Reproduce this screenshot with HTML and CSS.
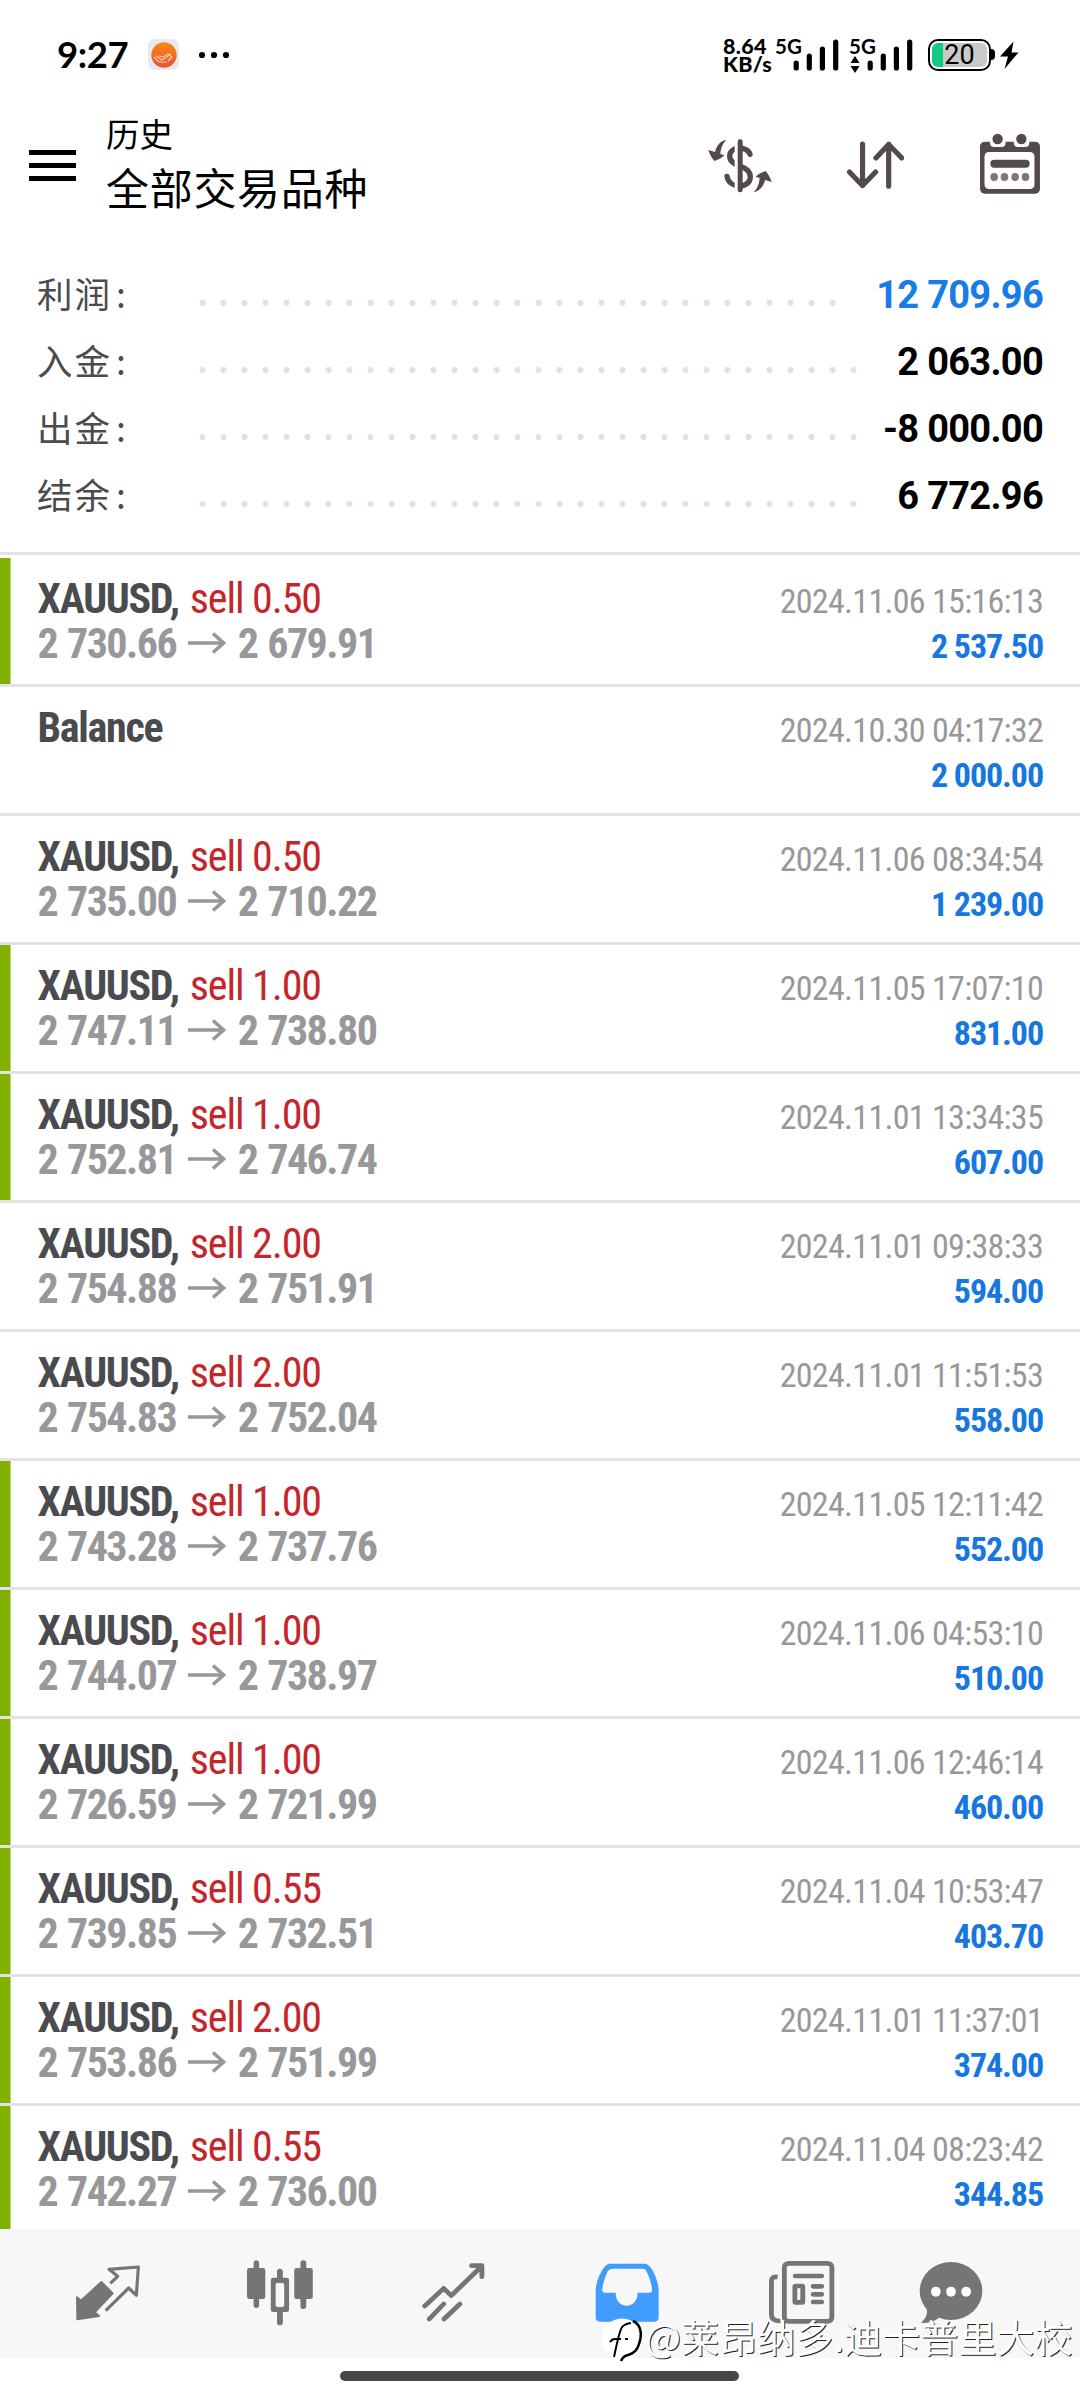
FILE: index.html
```
<!DOCTYPE html>
<html lang="zh-CN">
<head>
<meta charset="utf-8">
<title>历史</title>
<link rel="stylesheet" href="styles.css">
</head>
<body>
<div class="screen">
  <div class="status">
    <span class="time">9:27</span>
    <svg class="app-badge" width="31" height="31" viewBox="0 0 31 31"><defs><linearGradient id="sun" x1="0" y1="0" x2="0" y2="1"><stop offset="0" stop-color="#f78b10"/><stop offset="1" stop-color="#e9503c"/></linearGradient></defs><rect width="31" height="31" rx="7" fill="#e6e9f1"/><circle cx="16" cy="16" r="12.700" fill="url(#sun)"/><path d="M6 18l5 5h8M8 17l6 4 9-6M11 17l4 1 5-3 4 3-4 4" fill="none" stroke="#fbd3a0" stroke-width="1.100"/></svg>
    <svg class="more" width="32" height="8" viewBox="0 0 32 8"><circle cx="4" cy="4" r="3.100"/><circle cx="16" cy="4" r="3.100"/><circle cx="28" cy="4" r="3.100"/></svg>
    <span class="speed">8.64<br>KB/s</span>
    <span class="net">5G</span>
    <svg class="bars" width="46" height="32" viewBox="0 0 46 32"><path d="M3.200 24v5M16.300 17v12M29.400 10v19M42.700 3v26"/></svg>
    <span class="net second">5G<svg class="updown" width="10" height="17" viewBox="0 0 10 17"><path d="M5 0l4.500 7h-9zM5 17L.5 10h9z"/></svg></span>
    <svg class="bars second" width="46" height="32" viewBox="0 0 46 32"><path d="M3.200 24v5M16.300 17v12M29.400 10v19M42.700 3v26"/></svg>
    <div class="battery"><span>20</span></div>
    <svg class="bolt" width="28" height="30" viewBox="0 0 28 30"><path d="M0 9q4 0 4 4v3q0 4-4 4z"/><path d="M22.500 1.500L9 16.500h8L13.500 29 27.500 12.500h-7z"/></svg>
  </div>

  <header class="header">
    <div class="burger"><i></i><i></i><i></i></div>
    <div class="titles"><span class="title">历史</span><span class="subtitle">全部交易品种</span></div>
    <svg class="act dollar" width="66.700" height="56.700" viewBox="50 50 200 170"><path d="M179 102C176 90 160 83 147 83C128 84 118 95 118 107C118 124 132 131 150 138C168 144 180 152 180 170C180 186 166 196 150 197C128 197 113 186 110 168" fill="none" stroke="#544a49" stroke-width="16" stroke-linecap="round"/><path d="M133 50h12v170h-12z" fill="#fff"/><rect x="142" y="57" width="15" height="159" rx="7"/><path id="swap" d="M108 58C90 62 78 76 74 95L54 89C58 103 65 113 72 122C82 118 92 116 102 105L90 101C91 86 96 70 108 58Z"/><use href="#swap" transform="rotate(180 149 137)"/></svg>
    <svg class="act sort" width="58.500" height="48.300" viewBox="888 424 170 145" preserveAspectRatio="none"><path d="M936 433V558M898 517L936 558L974 517M1012 560V434M975 475L1012 434L1050 475" fill="none" stroke="#544a49" stroke-width="15" stroke-linecap="round" stroke-linejoin="round"/></svg>
    <svg class="act cal" width="62" height="62" viewBox="1276 400 180 186" preserveAspectRatio="none"><rect x="1279" y="426" width="174" height="156" rx="14"/><rect x="1292" y="457" width="145" height="111" rx="13" fill="#fff"/><path d="M1308 424h45v5q0 13-12 13h-21q-12 0-12-13zM1377 424h45v5q0 13-12 13h-21q-12 0-12-13z" fill="#fff"/><ellipse cx="1330" cy="418" rx="15" ry="16"/><ellipse cx="1399" cy="418" rx="15" ry="16"/><rect x="1309" y="480" width="114" height="24" rx="11"/><g fill="#7f7674"><ellipse cx="1320" cy="532" rx="11" ry="12"/><ellipse cx="1350" cy="532" rx="11" ry="12"/><ellipse cx="1381" cy="532" rx="11" ry="12"/><ellipse cx="1411" cy="532" rx="11" ry="12"/></g></svg>
  </header>

  <section class="summary">
    <div class="sum"><span class="label">利润<i>:</i></span><i class="dots short"></i><b class="blue">12 709.96</b></div>
    <div class="sum"><span class="label">入金<i>:</i></span><i class="dots"></i><b>2 063.00</b></div>
    <div class="sum"><span class="label">出金<i>:</i></span><i class="dots"></i><b>-8 000.00</b></div>
    <div class="sum"><span class="label">结余<i>:</i></span><i class="dots"></i><b>6 772.96</b></div>
  </section>

  <svg width="0" height="0" class="defs"><symbol id="arrow" viewBox="0 0 38 22"><path d="M0 11H34M25 1.500L35.500 11L25 20.500" fill="none" stroke="#98989b" stroke-width="3.600"/></symbol></svg>

  <main class="deals">
    <article class="deal tp"><div class="line"><b>XAUUSD,</b><span class="side">sell 0.50</span><time>2024.11.06 15:16:13</time></div><div class="line price"><b>2 730.66</b><svg><use href="#arrow"/></svg><b>2 679.91</b><strong>2 537.50</strong></div></article>
    <article class="deal"><div class="line"><b>Balance</b><time>2024.10.30 04:17:32</time></div><div class="line price"><b>&nbsp;</b><strong>2 000.00</strong></div></article>
    <article class="deal"><div class="line"><b>XAUUSD,</b><span class="side">sell 0.50</span><time>2024.11.06 08:34:54</time></div><div class="line price"><b>2 735.00</b><svg><use href="#arrow"/></svg><b>2 710.22</b><strong>1 239.00</strong></div></article>
    <article class="deal tp"><div class="line"><b>XAUUSD,</b><span class="side">sell 1.00</span><time>2024.11.05 17:07:10</time></div><div class="line price"><b>2 747.11</b><svg><use href="#arrow"/></svg><b>2 738.80</b><strong>831.00</strong></div></article>
    <article class="deal tp"><div class="line"><b>XAUUSD,</b><span class="side">sell 1.00</span><time>2024.11.01 13:34:35</time></div><div class="line price"><b>2 752.81</b><svg><use href="#arrow"/></svg><b>2 746.74</b><strong>607.00</strong></div></article>
    <article class="deal"><div class="line"><b>XAUUSD,</b><span class="side">sell 2.00</span><time>2024.11.01 09:38:33</time></div><div class="line price"><b>2 754.88</b><svg><use href="#arrow"/></svg><b>2 751.91</b><strong>594.00</strong></div></article>
    <article class="deal"><div class="line"><b>XAUUSD,</b><span class="side">sell 2.00</span><time>2024.11.01 11:51:53</time></div><div class="line price"><b>2 754.83</b><svg><use href="#arrow"/></svg><b>2 752.04</b><strong>558.00</strong></div></article>
    <article class="deal tp"><div class="line"><b>XAUUSD,</b><span class="side">sell 1.00</span><time>2024.11.05 12:11:42</time></div><div class="line price"><b>2 743.28</b><svg><use href="#arrow"/></svg><b>2 737.76</b><strong>552.00</strong></div></article>
    <article class="deal tp"><div class="line"><b>XAUUSD,</b><span class="side">sell 1.00</span><time>2024.11.06 04:53:10</time></div><div class="line price"><b>2 744.07</b><svg><use href="#arrow"/></svg><b>2 738.97</b><strong>510.00</strong></div></article>
    <article class="deal tp"><div class="line"><b>XAUUSD,</b><span class="side">sell 1.00</span><time>2024.11.06 12:46:14</time></div><div class="line price"><b>2 726.59</b><svg><use href="#arrow"/></svg><b>2 721.99</b><strong>460.00</strong></div></article>
    <article class="deal tp"><div class="line"><b>XAUUSD,</b><span class="side">sell 0.55</span><time>2024.11.04 10:53:47</time></div><div class="line price"><b>2 739.85</b><svg><use href="#arrow"/></svg><b>2 732.51</b><strong>403.70</strong></div></article>
    <article class="deal tp"><div class="line"><b>XAUUSD,</b><span class="side">sell 2.00</span><time>2024.11.01 11:37:01</time></div><div class="line price"><b>2 753.86</b><svg><use href="#arrow"/></svg><b>2 751.99</b><strong>374.00</strong></div></article>
    <article class="deal tp"><div class="line"><b>XAUUSD,</b><span class="side">sell 0.55</span><time>2024.11.04 08:23:42</time></div><div class="line price"><b>2 742.27</b><svg><use href="#arrow"/></svg><b>2 736.00</b><strong>344.85</strong></div></article>
  </main>

  <nav class="tabs">
    <svg width="66.700" height="60" viewBox="45 40 200 180"><path d="M124 97L158 131L104 188L117 199L52 209L51 143L63 153Z" stroke="#757575" stroke-width="6" stroke-linejoin="round"/><path d="M151 101L173 80L147 59L235 52L229 137L206 115L137 183" fill="none" stroke="#757575" stroke-width="9.500" stroke-linejoin="round"/></svg>
    <svg width="67.500" height="66" viewBox="715 180 196 198" preserveAspectRatio="none"><rect x="718" y="204" width="53" height="93" rx="7"/><rect x="737" y="181" width="16" height="143" rx="8"/><path fill-rule="evenodd" d="M794 233h39q7 0 7 7v89q0 7-7 7h-39q-7 0-7-7v-89q0-7 7-7zM806 249q-5 0-5 5v62q0 5 5 5h15q5 0 5-5v-62q0-5-5-5z"/><path d="M805 236v-22q0-8 8-8t9 8v22zM805 333v35q0 8 8 8t9-8v-35z"/><rect x="855" y="204" width="54" height="93" rx="7"/><rect x="873" y="181" width="17" height="146" rx="8"/></svg>
    <svg width="64.700" height="60.700" viewBox="1222 185 188 182" preserveAspectRatio="none"><path d="M1233 317L1288 264L1310 286L1390 206M1369 196H1399V229M1246 356L1288 311M1289 356L1335 311" fill="none" stroke="#757575" stroke-width="14" stroke-linecap="round" stroke-linejoin="round"/><path d="M1380 196h20v22z"/></svg>
    <svg class="current" width="64" height="59.300" viewBox="160 187 186 178" preserveAspectRatio="none"><path fill-rule="evenodd" d="M200 189H308C328 196 345 245 345 270V350Q345 363 332 363H175Q162 363 162 350V270C162 245 180 196 200 189ZM210 204Q201 204 197 212C190 228 182 250 181 268Q181 276 190 276H220C220 300 234 315 252 315S284 300 284 276H317Q326 276 326 268C325 252 318 228 309 211Q306 204 298 204Z"/></svg>
    <svg width="67.500" height="64.700" viewBox="662 178 196 194" preserveAspectRatio="none"><g fill="none" stroke="#757575" stroke-width="14"><rect x="709.500" y="188" width="138" height="174" rx="12"/><path d="M690 229C676 227 672 232 672 245V343Q672 361 698 361"/><path d="M741 226H818M793 257H818M793 281H818M793 304H818" stroke-linecap="round"/><rect x="740" y="256" width="23" height="49" rx="2"/></g></svg>
    <svg width="64.700" height="63.300" viewBox="1100 178 188 190" preserveAspectRatio="none"><ellipse cx="1193" cy="268" rx="91" ry="87"/><path d="M1118 310C1130 335 1120 350 1106 363C1125 366 1145 360 1162 345Z"/><g fill="#fff"><ellipse cx="1149" cy="270" rx="14" ry="15"/><ellipse cx="1193" cy="270" rx="14" ry="15"/><ellipse cx="1237" cy="270" rx="14" ry="15"/></g></svg>
  </nav>
  <div class="home"><i></i></div>

  <div class="watermark">
    <svg width="44" height="50" viewBox="0 0 44 50"><circle cx="21" cy="25" r="20.500" fill="#fff"/><path d="M13 43C15 34 17 23 20 15Q22 10 30 9M9 28q2-3 5-3h6M24 25h3" fill="none" stroke="#000" stroke-width="2"/><path d="M32 7C41 11 41 22 38 30C36 38 31 40 27 41Q22 42 20 47" fill="none" stroke="#000" stroke-width="2.500"/></svg>
    <span>@莱昂纳多.迪卡普里大校</span>
  </div>
</div>
</body>
</html>
```
FILE: styles.css
```
* { box-sizing: border-box; }
body { margin: 0; background: #fff; }
svg { display: block; flex: none; }
.defs { position: absolute; }

.screen {
  position: relative;
  display: flex;
  flex-direction: column;
  width: 1080px;
  height: 2400px;
  overflow: hidden;
  background: #fff;
  font-family: "Roboto Condensed", Roboto, sans-serif;
}

/* status bar */
.status {
  display: flex;
  align-items: flex-start;
  height: 110px;
  padding: 39px 0 0 57px;
  font-family: Lato, sans-serif;
  font-weight: 700;
  color: #000;
}
.time { width: 91px; font-size: 36.500px; line-height: 30px; white-space: nowrap; letter-spacing: -0.400px; }
.more { margin: 12px 0 0 19px; }
.speed {
  width: 52px;
  margin-left: 493px;
  margin-top: -2px;
  font-size: 21.500px;
  line-height: 18px;
  font-weight: 900;
  letter-spacing: 0.300px;
}
.net { position: relative; width: 18px; font-size: 20.500px; line-height: 15px; }
.net.second { margin-left: 10px; }
.updown { position: absolute; left: 1px; top: 17px; }
.bars { fill: none; stroke: #000; stroke-width: 5.200; stroke-linecap: round; }
.battery {
  width: 63px;
  height: 32px;
  margin-left: 15px;
  padding: 2px;
  border: 2px solid #000;
  border-radius: 10px;
  background: linear-gradient(90deg, #14c886 11px, #c9c9c9 11px) content-box;
  font: 400 27px/25px Roboto, sans-serif;
  text-align: center;
}
.bolt { margin: 1px 0 0 0; }

/* header */
.header { display: flex; height: 142px; padding-left: 29px; fill: #544a49; }
.burger { display: flex; flex-direction: column; gap: 8px; width: 47px; padding-top: 40px; }
.burger i { height: 5px; background: #000; }
.titles {
  display: flex;
  flex-direction: column;
  width: 630.500px;
  padding-left: 30px;
  font-family: "Noto Sans CJK SC", sans-serif;
  color: #000;
}
.title { margin-top: -1px; font-size: 33.500px; line-height: 48px; }
.subtitle { margin-top: -1px; font-size: 43px; line-height: 60px; letter-spacing: 0.700px; }
.dollar { margin-top: 26.700px; }
.sort { margin: 31.300px 0 0 72.400px; }
.cal { margin: 23.300px 0 0 75px; }

/* totals */
.summary { height: 303px; padding: 9px 37px 0 37px; border-bottom: 3px solid #e3e3e5; }
.sum { display: flex; align-items: center; height: 67px; }
.label {
  width: 155px;
  margin-top: -4px;
  font: 400 35.500px/50px "Noto Sans CJK SC", sans-serif;
  letter-spacing: 2px;
  color: #4b4b4d;
}
.label i { font-style: normal; margin-left: 4px; }
.dots {
  width: 672px;
  height: 6px;
  margin-top: 16px;
  background: radial-gradient(circle, #e2e2e2 2.800px, transparent 3.400px) 0 0 / 21px 6px;
}
.dots.short { width: 651px; }
.sum b { margin-left: auto; margin-top: 2px; font: 700 38px/45px Roboto, sans-serif; white-space: nowrap; letter-spacing: -0.700px; }
.sum .blue { color: #177be8; }

/* deals */
.deals { flex: none; height: 1674px; padding-top: 3px; overflow: hidden; }
.deal { height: 129px; padding: 18px 37px 0 37.500px; border-bottom: 3px solid #e3e3e5; }
.deal.tp {
  background: linear-gradient(#80b000, #80b000) 0 0 / 10.500px 100% no-repeat;
}
.line { display: flex; align-items: baseline; height: 45px; font-size: 42px; line-height: 45px; white-space: nowrap; color: #4b4b4f; }
.line b { letter-spacing: -1.300px; }
.side { margin-left: 11px; color: #c4262c; letter-spacing: -1.100px; }
.line.price { color: #98989b; }
.line.price b { letter-spacing: -1.500px; word-spacing: 1.500px; }
.price svg { width: 38px; height: 22px; margin: 0 11.500px 0 12px; align-self: flex-start; margin-top: 11px; }
time { margin-left: auto; font-size: 34px; color: #98989b; letter-spacing: -0.700px; }
strong { margin-left: auto; font-size: 34px; color: #1777e0; letter-spacing: -1.100px; }

/* bottom tabs */
.tabs {
  flex: none;
  display: grid;
  grid-template-columns: 171.200px 174.600px 174.300px 172.900px 150.800px auto;
  align-items: center;
  height: 129px;
  padding: 0 0 2px 75px;
  background: #f7f7f7;
  fill: #757575;
}
.current { fill: #409cff; }
.home { padding: 13px 0 0 340px; }
.home i { display: block; width: 399px; height: 10px; border-radius: 5px; background: #484848; }

.watermark {
  position: absolute;
  left: 601px;
  top: 2314px;
  display: flex;
  align-items: flex-start;
  color: #fff;
  font: 400 38px/46px "Noto Sans CJK SC", sans-serif;
  letter-spacing: 0.100px;
  white-space: nowrap;
  text-shadow: 1px 1px 0 #222;
}
.watermark span { margin-top: -1px; }
```
